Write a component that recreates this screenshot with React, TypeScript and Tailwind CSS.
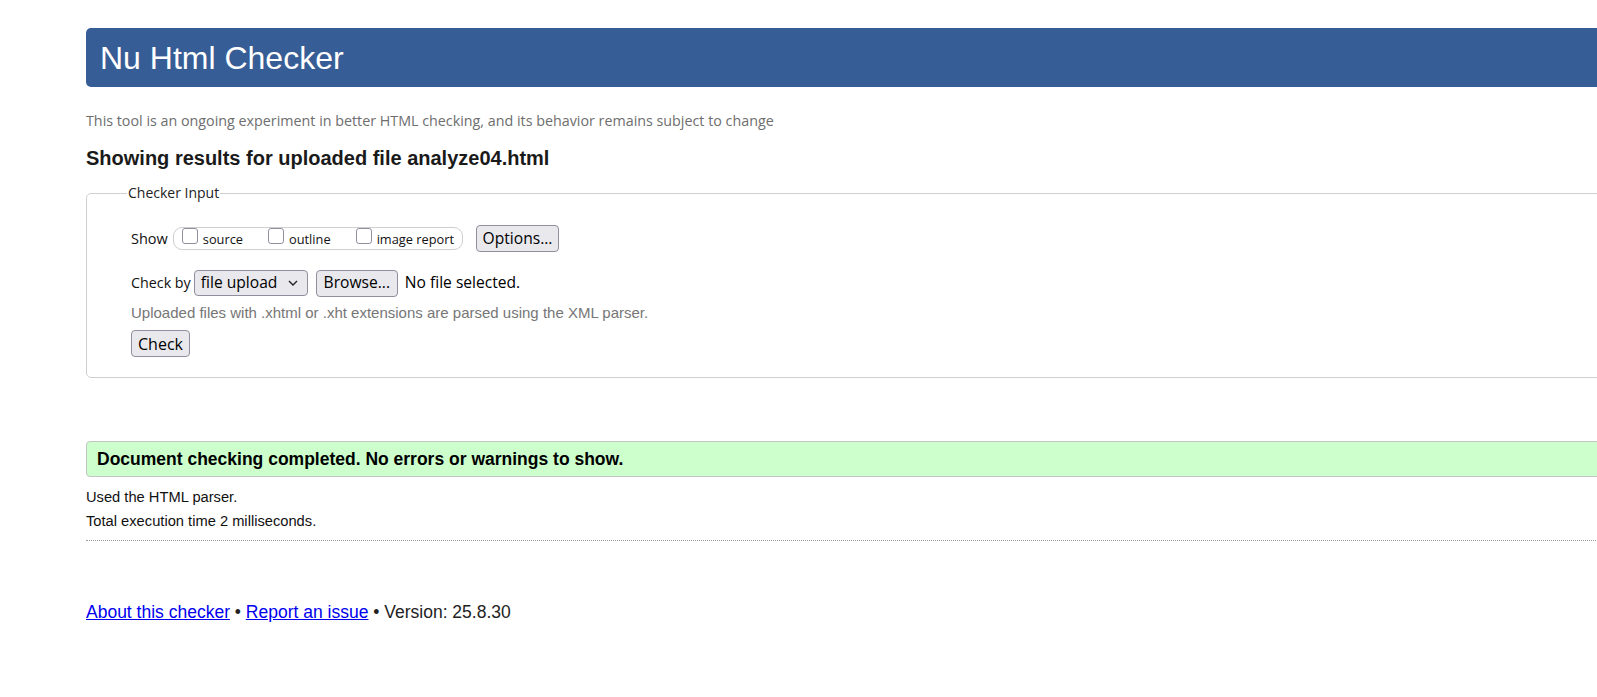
import React from "react";

const seg = { fontFamily: '"Open Sans", "Noto Sans", sans-serif' };

function Checkbox() {
  return (
    <span className="inline-block w-[16px] h-[16px] rounded-[3px] border border-[#8f8f9d] bg-white shrink-0" />
  );
}

function Btn({ children, className = "" }: { children: React.ReactNode; className?: string }) {
  return (
    <span
      className={
        "inline-flex items-center justify-center h-[27px] rounded-[4px] border border-[#8f8f9d] bg-[#e9e9ed] text-[#000] px-[6px] " +
        className
      }
    >
      {children}
    </span>
  );
}

export default function App() {
  return (
    <div className="w-[1597px] h-[697px] overflow-hidden bg-white" style={{ fontFamily: '"Liberation Sans", Arial, sans-serif' }}>
      <div className="ml-[86px] w-[1700px]">
        <div className="mt-[28px] h-[59px] rounded-[5px] bg-[#365D95] flex items-center pl-[14px]">
          <h1 className="text-[32px] leading-none text-white font-normal">Nu Html Checker</h1>
        </div>

        <p className="mt-[24px] text-[14.3px] leading-[20px] text-[#6e6e6e]" style={seg}>
          This tool is an ongoing experiment in better HTML checking, and its behavior remains subject to change
        </p>

        <h2 className="mt-[15px] text-[20px] leading-[24px] font-bold text-[#1a1a1a]">
          Showing results for uploaded file analyze04.html
        </h2>

        <fieldset className="mt-[13px] border border-[#cfcfcf] rounded-[5px] pl-[40px] pt-[22px] pb-[21px] h-[195px]">
          <legend className="px-[1px] text-[14px] leading-[20px] text-[#222]" style={seg}>
            Checker Input
          </legend>

          <div className="pl-[4px]">
            <div className="flex items-baseline h-[28px]">
              <span className="text-[14.5px] text-[#111]" style={seg}>Show</span>
              <span className="ml-[5px] inline-flex items-baseline h-[23px] px-[8px] border border-[#cfcfcf] rounded-[9px] text-[12.8px] text-[#111]" style={seg}>
                <Checkbox />
                <span className="ml-[5px]">source</span>
                <span className="ml-[25px] inline-flex items-baseline">
                  <Checkbox />
                  <span className="ml-[5px]">outline</span>
                </span>
                <span className="ml-[25px] inline-flex items-baseline">
                  <Checkbox />
                  <span className="ml-[5px]">image report</span>
                </span>
              </span>
              <Btn className="ml-[13px] w-[83px] text-[15.6px]">
                <span style={seg}>Options...</span>
              </Btn>
            </div>

            <div className="mt-[17px] flex items-center h-[26px]">
              <span className="text-[14.3px] text-[#111]" style={seg}>Check by</span>
              <span className="ml-[3px] inline-flex items-center justify-between w-[114px] h-[26px] rounded-[4px] border border-[#8f8f9d] bg-[#e9e9ed] pl-[6px] pr-[9px] text-[15.6px] text-black" style={seg}>
                <span>file upload</span>
                <svg width="10" height="6" viewBox="0 0 10 6" fill="none" stroke="#222" strokeWidth="1.4">
                  <path d="M1 1l4 4 4-4" />
                </svg>
              </span>
              <Btn className="ml-[8px] w-[82px] h-[26px] text-[15.6px]">
                <span style={seg}>Browse...</span>
              </Btn>
              <span className="ml-[7px] text-[15.6px] text-black" style={seg}>No file selected.</span>
            </div>

            <p className="mt-[7px] text-[15px] leading-[20px] text-[#767676]">
              Uploaded files with .xhtml or .xht extensions are parsed using the XML parser.
            </p>

            <div className="mt-[7px]">
              <Btn className="w-[59px] h-[25px] text-[16px]">
                <span style={seg}>Check</span>
              </Btn>
            </div>
          </div>
        </fieldset>

        <div className="mt-[63px] h-[36px] border border-[#c4c4c4] rounded-[4px] bg-[#ccffcc] flex items-center pl-[10px]">
          <span className="text-[17.5px] font-bold text-black">
            Document checking completed. No errors or warnings to show.
          </span>
        </div>

        <p className="mt-[10px] text-[14.7px] leading-[20px] text-[#111]">Used the HTML parser.</p>
        <p className="mt-[4px] text-[14.7px] leading-[20px] text-[#111] pb-[9px] border-b border-dotted border-[#9a9a9a]">
          Total execution time 2 milliseconds.
        </p>

        <p className="mt-[60px] text-[17.5px] leading-[22px] text-[#222]">
          <a href="#" className="text-[#0000ee] underline">About this checker</a> •{" "}
          <a href="#" className="text-[#0000ee] underline">Report an issue</a> • Version: 25.8.30
        </p>
      </div>
    </div>
  );
}
